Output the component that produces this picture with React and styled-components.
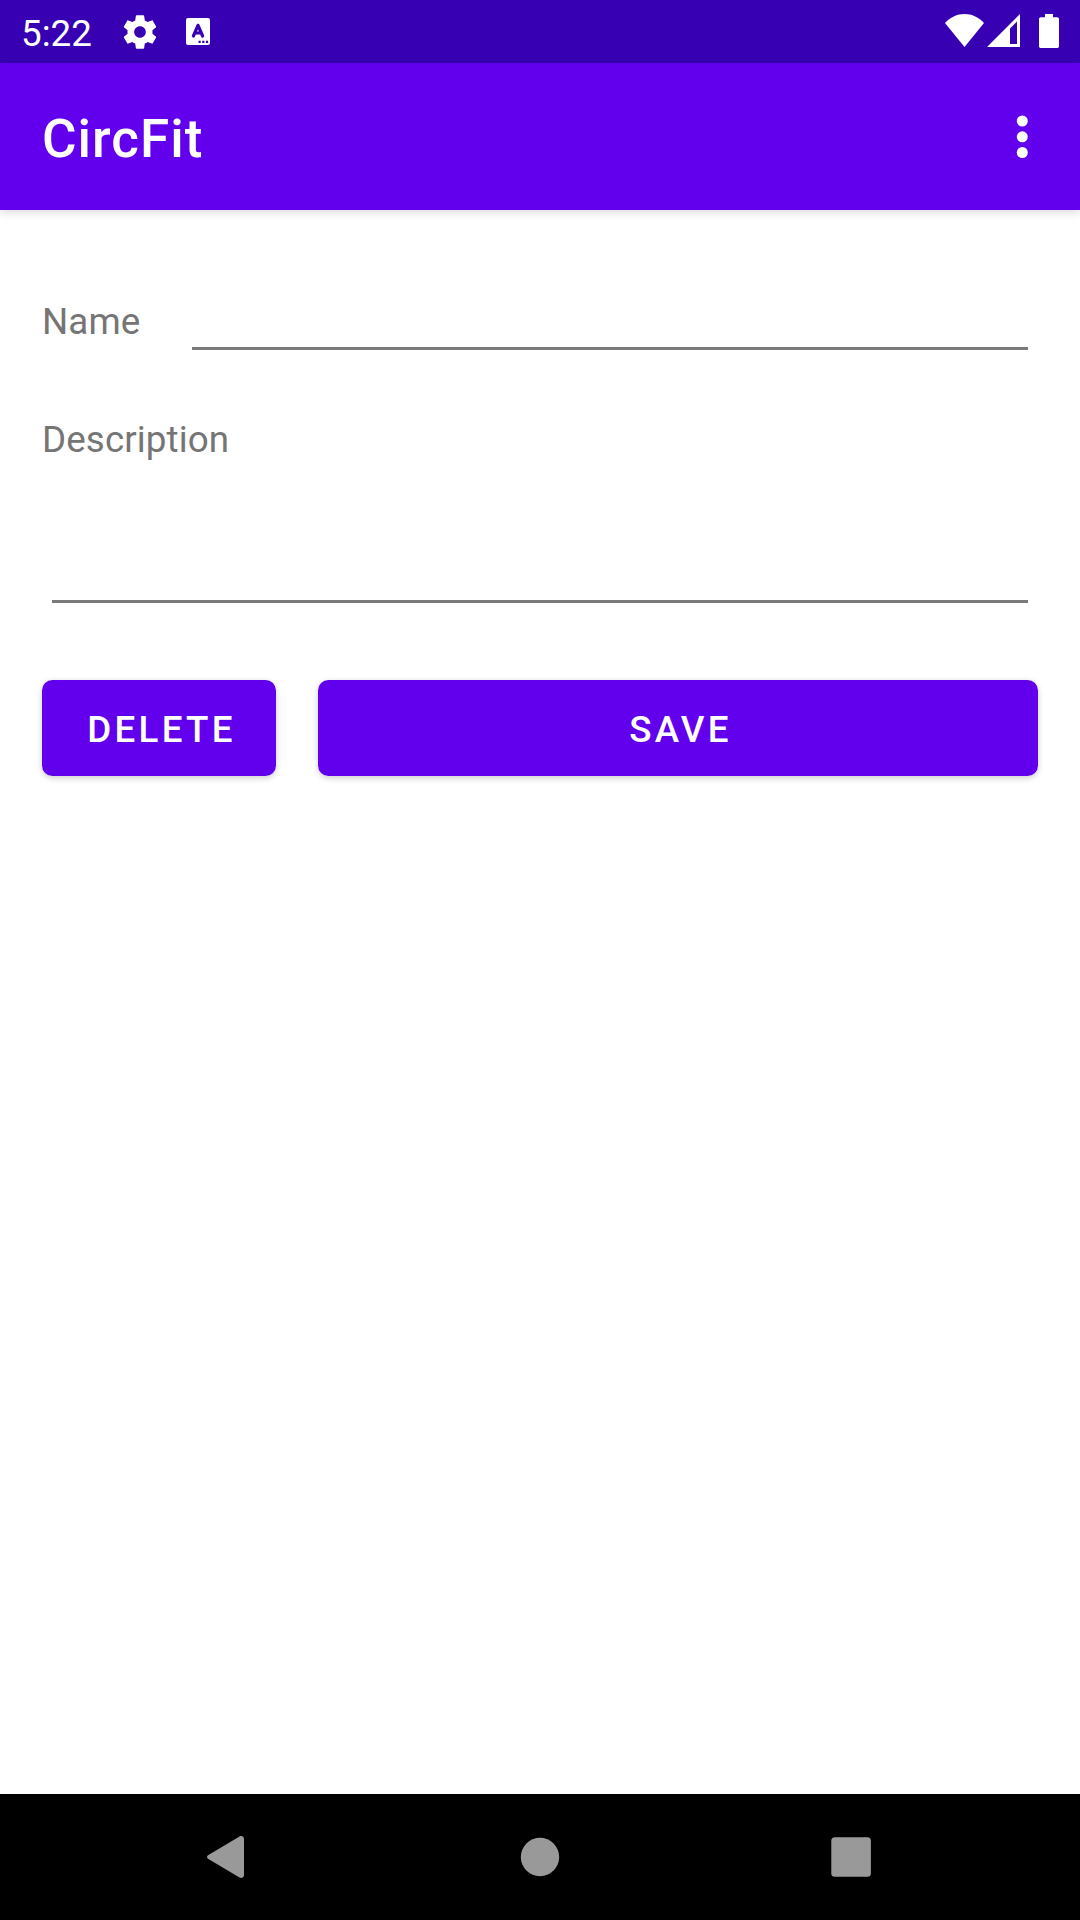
import React from "react";
import styled, { createGlobalStyle } from "styled-components";

const GlobalStyle = createGlobalStyle`
  *, *::before, *::after { box-sizing: border-box; }
  body { margin: 0; background: #fff; font-family: Roboto, "Noto Sans", sans-serif; }
  button, input, textarea { font: inherit; }
`;

const Screen = styled.div`
  display: flex;
  flex-direction: column;
  width: 1080px;
  height: 1920px;
  overflow: hidden;
  background: #fff;
`;

const StatusBar = styled.header`
  display: flex;
  align-items: flex-start;
  justify-content: space-between;
  flex: none;
  height: 63px;
  padding: 0 20px 0 21px;
  background: #3700b3;
  color: #fff;
`;

const StatusGroup = styled.div`
  display: flex;
  align-items: flex-start;
`;

const Clock = styled.span`
  width: 99px;
  padding-top: 2px;
  font-size: 36.75px;
  line-height: 63px;
`;

const Glyph = styled.svg`
  display: block;
  flex: none;
  width: ${(p) => p.$w}px;
  height: ${(p) => p.$h}px;
  margin: ${(p) => p.$m || "0"};
  fill: currentColor;
`;

const AppBar = styled.div`
  display: flex;
  align-items: center;
  justify-content: space-between;
  flex: none;
  height: 147px;
  padding: 0 42px;
  background: #6200ee;
  color: #fff;
  box-shadow: 0 2px 9px rgba(0, 0, 0, 0.16);
`;

const Title = styled.h1`
  margin: 0;
  padding-top: 4px;
  font-size: 53px;
  line-height: 62px;
  font-weight: 500;
  letter-spacing: 0.019em;
`;

const MenuButton = styled.button`
  display: flex;
  justify-content: center;
  width: 32px;
  margin: 0;
  padding: 0;
  border: 0;
  background: none;
  color: inherit;
`;

const Form = styled.main`
  display: flex;
  flex-direction: column;
  flex: 1;
  padding: 84px 42px 0;
`;

const NameRow = styled.div`
  display: flex;
  align-items: flex-start;
  height: 56px;
`;

const Label = styled.label`
  flex: none;
  width: ${(p) => p.$width || "auto"};
  padding-top: ${(p) => p.$top || 0}px;
  font-size: 36.75px;
  line-height: 44px;
  letter-spacing: 0.003em;
  color: #757575;
`;

const TextField = styled.input`
  flex: 1;
  min-width: 0;
  height: 56px;
  margin-right: 10px;
  padding: 0 0 8px;
  border: 0;
  border-bottom: 3px solid #7a7a7a;
  background: none;
  font-size: 47px;
  outline: none;
`;

const TextArea = styled.textarea`
  display: block;
  height: 141px;
  margin: 0 10px;
  padding: 0;
  border: 0;
  border-bottom: 3px solid #7a7a7a;
  background: none;
  font-size: 47px;
  resize: none;
  overflow: hidden;
  outline: none;
`;

const Actions = styled.div`
  display: flex;
  gap: 42px;
  margin-top: 77px;
`;

const ActionButton = styled.button`
  flex: ${(p) => (p.$grow ? "1" : "0 0 234px")};
  height: 96px;
  padding: 3px 0 0 5px;
  border: 0;
  border-radius: 10.5px;
  background: #6200ee;
  color: #fff;
  font-size: 36.75px;
  line-height: 44px;
  font-weight: 500;
  letter-spacing: 0.0893em;
  text-transform: uppercase;
  box-shadow: 0 2px 6px rgba(0, 0, 0, 0.2);
`;

const NavBar = styled.nav`
  display: flex;
  align-items: center;
  justify-content: space-between;
  flex: none;
  height: 126px;
  padding: 0 208px 0 206px;
  background: #000;
  color: #999;
`;

export default function App() {
  return (
    <>
      <GlobalStyle />
      <Screen>
        <StatusBar>
          <StatusGroup>
            <Clock>5:22</Clock>
            <Glyph $w={40} $h={40} $m="12px 0 0 0" viewBox="0 0 24 24">
              <path d="M19.43 12.98c.04-.32.07-.64.07-.98s-.03-.66-.07-.98l2.11-1.65c.19-.15.24-.42.12-.64l-2-3.46c-.12-.22-.39-.3-.61-.22l-2.49 1c-.52-.4-1.08-.73-1.69-.98l-.38-2.65C14.46 2.18 14.25 2 14 2h-4c-.25 0-.46.18-.49.42l-.38 2.65c-.61.25-1.17.59-1.69.98l-2.49-1c-.23-.09-.49 0-.61.22l-2 3.46c-.13.22-.07.49.12.64l2.11 1.65c-.04.32-.07.65-.07.98s.03.66.07.98l-2.11 1.65c-.19.15-.24.42-.12.64l2 3.46c.12.22.39.3.61.22l2.49-1c.52.4 1.08.73 1.69.98l.38 2.65c.03.24.24.42.49.42h4c.25 0 .46-.18.49-.42l.38-2.65c.61-.25 1.17-.59 1.69-.98l2.49 1c.23.09.49 0 .61-.22l2-3.46c.12-.22.07-.49-.12-.64l-2.11-1.65zM12 15.5c-1.93 0-3.5-1.57-3.5-3.5s1.57-3.5 3.5-3.5 3.5 1.57 3.5 3.5-1.57 3.5-3.5 3.5z" />
            </Glyph>
            <Glyph $w={24} $h={27} $m="18px 0 0 26px" viewBox="0 0 24 27">
              <rect width="24" height="27" rx="2" />
              <path d="M7.4 18L12 7.3 16.600 18M9 15h6" fill="none" stroke="#3700b3" strokeWidth="3.2" strokeLinecap="round" strokeLinejoin="round" />
              <path d="M12.5 22.700h2.200v2.200h-2.200zM16.200 22.700h2.200v2.200h-2.200zM19.900 22.700h2.200v2.200h-2.200z" fill="#3700b3" />
            </Glyph>
          </StatusGroup>
          <StatusGroup>
            <Glyph $w={39} $h={33} $m="14px 3px 0 0" viewBox="0 0 39 33">
              <path d="M19.5 33L0 9C5 3.4 12 0 19.5 0S34 3.4 39 9z" />
            </Glyph>
            <Glyph $w={33} $h={33} $m="14px 19px 0 0" viewBox="0 0 33 33">
              <path fillRule="evenodd" d="M0 33L33 0v33zM23 14.600V30H30V7.600z" />
            </Glyph>
            <Glyph $w={20} $h={34} $m="14px 1px 0 0" viewBox="0 0 20 34">
              <path d="M6 0h8v3.3h4.2c1 0 1.8.8 1.8 1.8v27.1c0 1-.8 1.8-1.8 1.8H1.800C.8 34 0 33.200 0 32.200V5.100c0-1 .8-1.800 1.800-1.800H6z" />
            </Glyph>
          </StatusGroup>
        </StatusBar>
        <AppBar>
          <Title>CircFit</Title>
          <MenuButton aria-label="More options">
            <Glyph $w={12} $h={44} viewBox="0 0 12 44">
              <circle cx="6.3" cy="6" r="5.500" />
              <circle cx="6.3" cy="21.800" r="5.500" />
              <circle cx="6.3" cy="37.500" r="5.500" />
            </Glyph>
          </MenuButton>
        </AppBar>
        <Form>
          <NameRow>
            <Label htmlFor="name" $width="150px" $top={6}>Name</Label>
            <TextField id="name" />
          </NameRow>
          <Label htmlFor="description" $top={68}>Description</Label>
          <TextArea id="description" />
          <Actions>
            <ActionButton>Delete</ActionButton>
            <ActionButton $grow>Save</ActionButton>
          </Actions>
        </Form>
        <NavBar>
          <Glyph $w={38} $h={42} viewBox="0 0 38 42">
            <path d="M2 19.300L33.500.500C35.500-.500 38 .500 38 3v36c0 2.500-2.500 3.500-4.500 2.500L2 22.700c-1.300-.8-1.300-2.600 0-3.400z" />
          </Glyph>
          <Glyph $w={40} $h={40} $m="0 0 0 5px" viewBox="0 0 40 40">
            <circle cx="20" cy="20" r="19.200" />
          </Glyph>
          <Glyph $w={41} $h={40} viewBox="0 0 41 40">
            <rect x=".300" y=".200" width="39.600" height="39.600" rx="3.500" />
          </Glyph>
        </NavBar>
      </Screen>
    </>
  );
}
